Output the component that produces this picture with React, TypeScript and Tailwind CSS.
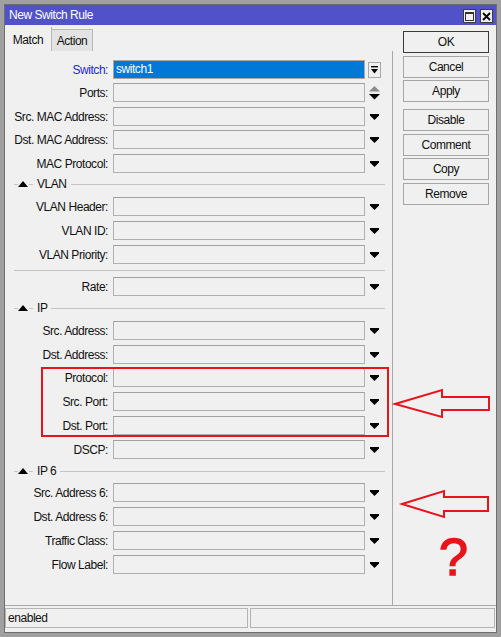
const font = "font-['Liberation_Sans',Arial,sans-serif] tracking-[-0.45px]";

type Item =
  | { kind: "field"; label: string; mt: string; special?: "switch" | "ports" }
  | { kind: "section"; label: string; mt: string }
  | { kind: "sep"; mt: string };

const items: Item[] = [
  { kind: "field", label: "Switch:", mt: "mt-0", special: "switch" },
  { kind: "field", label: "Ports:", mt: "mt-[4px]", special: "ports" },
  { kind: "field", label: "Src. MAC Address:", mt: "mt-[5px]" },
  { kind: "field", label: "Dst. MAC Address:", mt: "mt-[4px]" },
  { kind: "field", label: "MAC Protocol:", mt: "mt-[5px]" },
  { kind: "section", label: "VLAN", mt: "mt-[2px]" },
  { kind: "field", label: "VLAN Header:", mt: "mt-[4px]" },
  { kind: "field", label: "VLAN ID:", mt: "mt-[5px]" },
  { kind: "field", label: "VLAN Priority:", mt: "mt-[5px]" },
  { kind: "sep", mt: "mt-[6px]" },
  { kind: "field", label: "Rate:", mt: "mt-[6px]" },
  { kind: "section", label: "IP", mt: "mt-[3px]" },
  { kind: "field", label: "Src. Address:", mt: "mt-[4px]" },
  { kind: "field", label: "Dst. Address:", mt: "mt-[5px]" },
  { kind: "field", label: "Protocol:", mt: "mt-[4px]" },
  { kind: "field", label: "Src. Port:", mt: "mt-[5px]" },
  { kind: "field", label: "Dst. Port:", mt: "mt-[5px]" },
  { kind: "field", label: "DSCP:", mt: "mt-[5px]" },
  { kind: "section", label: "IP 6", mt: "mt-[3px]" },
  { kind: "field", label: "Src. Address 6:", mt: "mt-[3px]" },
  { kind: "field", label: "Dst. Address 6:", mt: "mt-[5px]" },
  { kind: "field", label: "Traffic Class:", mt: "mt-[5px]" },
  { kind: "field", label: "Flow Label:", mt: "mt-[5px]" },
];

function DownArrow() {
  return (
    <svg width="9" height="6" viewBox="0 0 9 6" className="ml-[5px]">
      <path d="M0 0h9v1.5L4.5 6 0 1.5z" fill="#000" />
    </svg>
  );
}

function FieldRow({ label, mt, special }: { label: string; mt: string; special?: "switch" | "ports" }) {
  return (
    <div className={`flex items-center h-[19px] ${mt}`}>
      <div className={`w-[103px] text-right text-[12px] ${special === "switch" ? "text-[#2424e6]" : "text-[#111]"}`}>
        {label}
      </div>
      {special === "switch" ? (
        <div className="ml-[5px] w-[252px] h-[19px] border border-[#a8a8a8] bg-[#0078d7] text-white text-[12px] leading-[17px] pl-[2px]">
          switch1
        </div>
      ) : (
        <div className="ml-[5px] w-[252px] h-[19px] border border-[#b0b0b0] border-t-[#a0a0a0] bg-[#f0f0f0]" />
      )}
      {special === "switch" ? (
        <div className="ml-[3px] w-[13px] h-[16px] border border-[#a8a8a8] flex items-center justify-center">
          <svg width="7" height="8" viewBox="0 0 7 8">
            <rect x="0" y="0" width="7" height="1.4" fill="#000" />
            <path d="M0 3h7L3.5 7.5z" fill="#000" />
          </svg>
        </div>
      ) : special === "ports" ? (
        <svg width="11" height="14" viewBox="0 0 11 14" className="ml-[4px]">
          <path d="M5.5 0L11 5.5H0z" fill="#8c8c8c" />
          <path d="M0 8h11L5.5 13.5z" fill="#000" />
        </svg>
      ) : (
        <DownArrow />
      )}
    </div>
  );
}

function Section({ label, mt }: { label: string; mt: string }) {
  return (
    <div className={`flex items-center h-[18px] ml-[9px] w-[371px] ${mt}`}>
      <span className="h-px w-[4px] bg-[#c4c4c4]" />
      <svg width="10" height="6" viewBox="0 0 10 6">
        <path d="M5 0L10 6H0z" fill="#000" />
      </svg>
      <span className="h-px w-[4px] ml-[1px] bg-[#c4c4c4]" />
      <span className="text-[12px] text-[#111] mx-[4px]">{label}</span>
      <span className="h-px flex-1 bg-[#c4c4c4]" />
    </div>
  );
}

function Btn({ label, mt, primary }: { label: string; mt: string; primary?: boolean }) {
  return (
    <div
      className={`${mt} w-[86px] h-[22px] flex items-center justify-center text-[12px] text-[#111] bg-[#f0f0f0] border ${
        primary ? "border-[#3a3a3a]" : "border-[#a6a6a6]"
      }`}
    >
      {label}
    </div>
  );
}

export default function App() {
  return (
    <div className={`relative w-[501px] h-[637px] bg-[#a0a0a0] p-[4px] ${font}`}>
      <div className="w-full h-full border border-[#6e6e6e] bg-[#f0f0f0] flex flex-col">
        {/* title bar */}
        <div className="h-[20px] bg-[#5151c9] flex items-start justify-between pl-[4px] pr-[3px]">
          <span className="text-white text-[12px] leading-[20px]">New Switch Rule</span>
          <div className="flex gap-[4px] pt-[4px]">
            <div className="w-[13px] h-[14px] bg-[#f0f0f0] border border-[#3c3c3c] flex items-center justify-center">
              <div className="w-[9px] h-[9px] border border-[#333] border-t-2" />
            </div>
            <div className="w-[13px] h-[14px] bg-[#f0f0f0] border border-[#3c3c3c] flex items-center justify-center">
              <svg width="9" height="9" viewBox="0 0 9 9">
                <path d="M1 1L8 8M8 1L1 8" stroke="#000" strokeWidth="1.8" />
              </svg>
            </div>
          </div>
        </div>

        {/* main */}
        <div className="flex flex-1">
          <div className="w-[388px] flex flex-col">
            <div className="h-[26px] flex items-end">
              <div className="h-[24px] w-[47px] border-r border-[#b8b8b8] flex items-center justify-center text-[12px] text-[#111] bg-[#f0f0f0] pt-[2px]">
                Match
              </div>
              <div className="h-[22px] w-[41px] border-t border-r border-[#b8b8b8] bg-[#e3e3e3] flex items-center justify-center text-[12px] text-[#111] pt-[1px]">
                Action
              </div>
            </div>
            <div className="flex-1 border-r border-[#a8a8a8] pt-[9px] flex flex-col">
              {items.map((it, i) =>
                it.kind === "field" ? (
                  <FieldRow key={i} label={it.label} mt={it.mt} special={it.special} />
                ) : it.kind === "section" ? (
                  <Section key={i} label={it.label} mt={it.mt} />
                ) : (
                  <div key={i} className={`h-px ml-[9px] w-[371px] bg-[#c4c4c4] ${it.mt}`} />
                )
              )}
            </div>
          </div>
          <div className="flex flex-col pl-[10px] pt-[6px]">
            <Btn label="OK" mt="mt-0" primary />
            <Btn label="Cancel" mt="mt-[3px]" />
            <Btn label="Apply" mt="mt-[2px]" />
            <Btn label="Disable" mt="mt-[7px]" />
            <Btn label="Comment" mt="mt-[3px]" />
            <Btn label="Copy" mt="mt-[2px]" />
            <Btn label="Remove" mt="mt-[3px]" />
          </div>
        </div>

        {/* status bar */}
        <div className="h-[27px] border-t border-[#a8a8a8] pt-[2px] flex">
          <div className="w-[243px] h-[20px] border border-[#b4b4b4] text-[12px] text-[#111] pl-[2px] leading-[18px]">
            enabled
          </div>
          <div className="ml-[2px] w-[245px] h-[20px] border border-[#b4b4b4]" />
        </div>
      </div>

      {/* annotations */}
      <div className="absolute left-[41px] top-[367px] w-[348px] h-[70px] border-2 border-[#e8141c]" />
      <svg className="absolute left-0 top-0 pointer-events-none" width="501" height="637" viewBox="0 0 501 637">
        <polygon
          points="395,404 442,390 442,397 489,397 489,410 442,410 442,417"
          fill="none"
          stroke="#e8141c"
          strokeWidth="2"
        />
        <polygon
          points="402,504 444,491 444,497 488,497 488,511 444,511 444,517"
          fill="none"
          stroke="#e8141c"
          strokeWidth="2"
        />
      </svg>
      <div className="absolute left-[439px] top-[531px] text-[52px] leading-none text-[#e8141c] tracking-normal [-webkit-text-stroke:1.5px_#e8141c]">
        ?
      </div>
    </div>
  );
}
